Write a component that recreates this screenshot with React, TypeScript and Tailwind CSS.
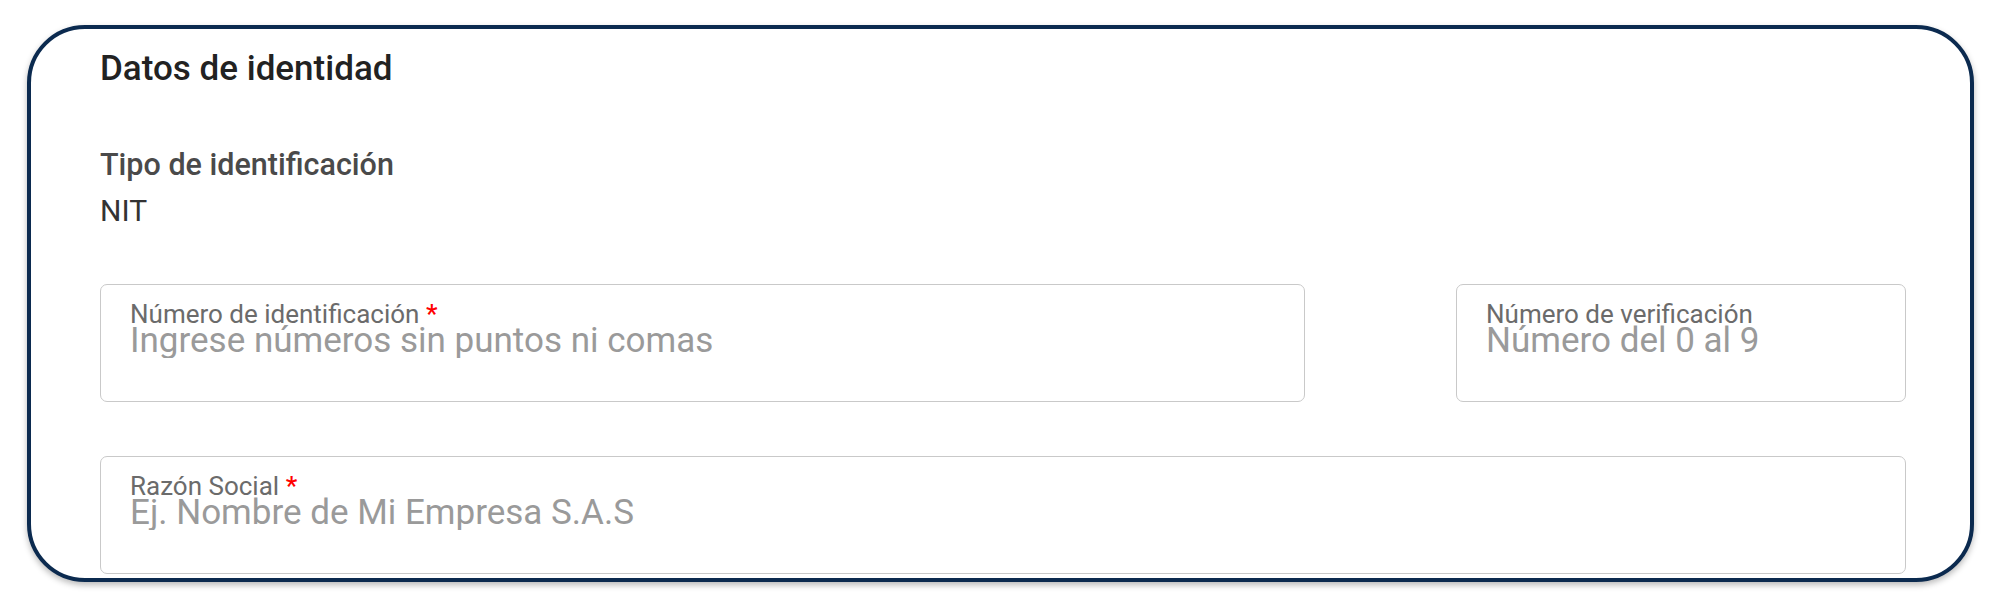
import React from "react"

function Field({
  label,
  placeholder,
  required,
  className,
}: {
  label: string
  placeholder: string
  required?: boolean
  className?: string
}) {
  return (
    <div
      className={
        "h-[118px] rounded-[7px] border border-[#c9c9c9] bg-white pl-[29px] pr-4 pt-[16px] flex flex-col " +
        (className ?? "")
      }
    >
      <label className="text-[26px] leading-none text-[#6b6b6b] whitespace-nowrap">
        {label}
        {required && <span className="text-[#ff0000] font-medium"> *</span>}
      </label>
      <input
        className="-mt-[4px] h-[35px] w-full bg-transparent text-[35px] leading-none text-[#333] outline-none placeholder:text-[#9a9a9a]"
        placeholder={placeholder}
      />
    </div>
  )
}

export default function App() {
  return (
    <main
      className="h-[606px] w-full bg-white pl-[27px] pt-[25px]"
      style={{ fontFamily: "Roboto, 'Liberation Sans', sans-serif" }}
    >
      {/* Card */}
      <section className="h-[557px] w-[1947px] overflow-hidden rounded-[58px] border-[4px] border-[#0b2a4f] bg-white pl-[69px] pr-[64px] pt-[22px] shadow-[0_3px_6px_rgba(0,0,0,0.28)]">
        <h2 className="text-[35px] font-medium leading-none text-[#222]">Datos de identidad</h2>

        <div className="mt-[64px]">
          <p className="text-[30.5px] font-medium leading-none text-[#4a4a4a]">Tipo de identificación</p>
          <p className="mt-[15px] text-[30px] leading-none text-[#333]">NIT</p>
        </div>

        <div className="mt-[58px] flex gap-[151px]">
          <Field
            className="flex-1"
            label="Número de identificación"
            placeholder="Ingrese números sin puntos ni comas"
            required
          />
          <Field className="w-[450px]" label="Número de verificación" placeholder="Número del 0 al 9" />
        </div>

        <Field
          className="mt-[54px]"
          label="Razón Social"
          placeholder="Ej. Nombre de Mi Empresa S.A.S"
          required
        />
      </section>
    </main>
  )
}
